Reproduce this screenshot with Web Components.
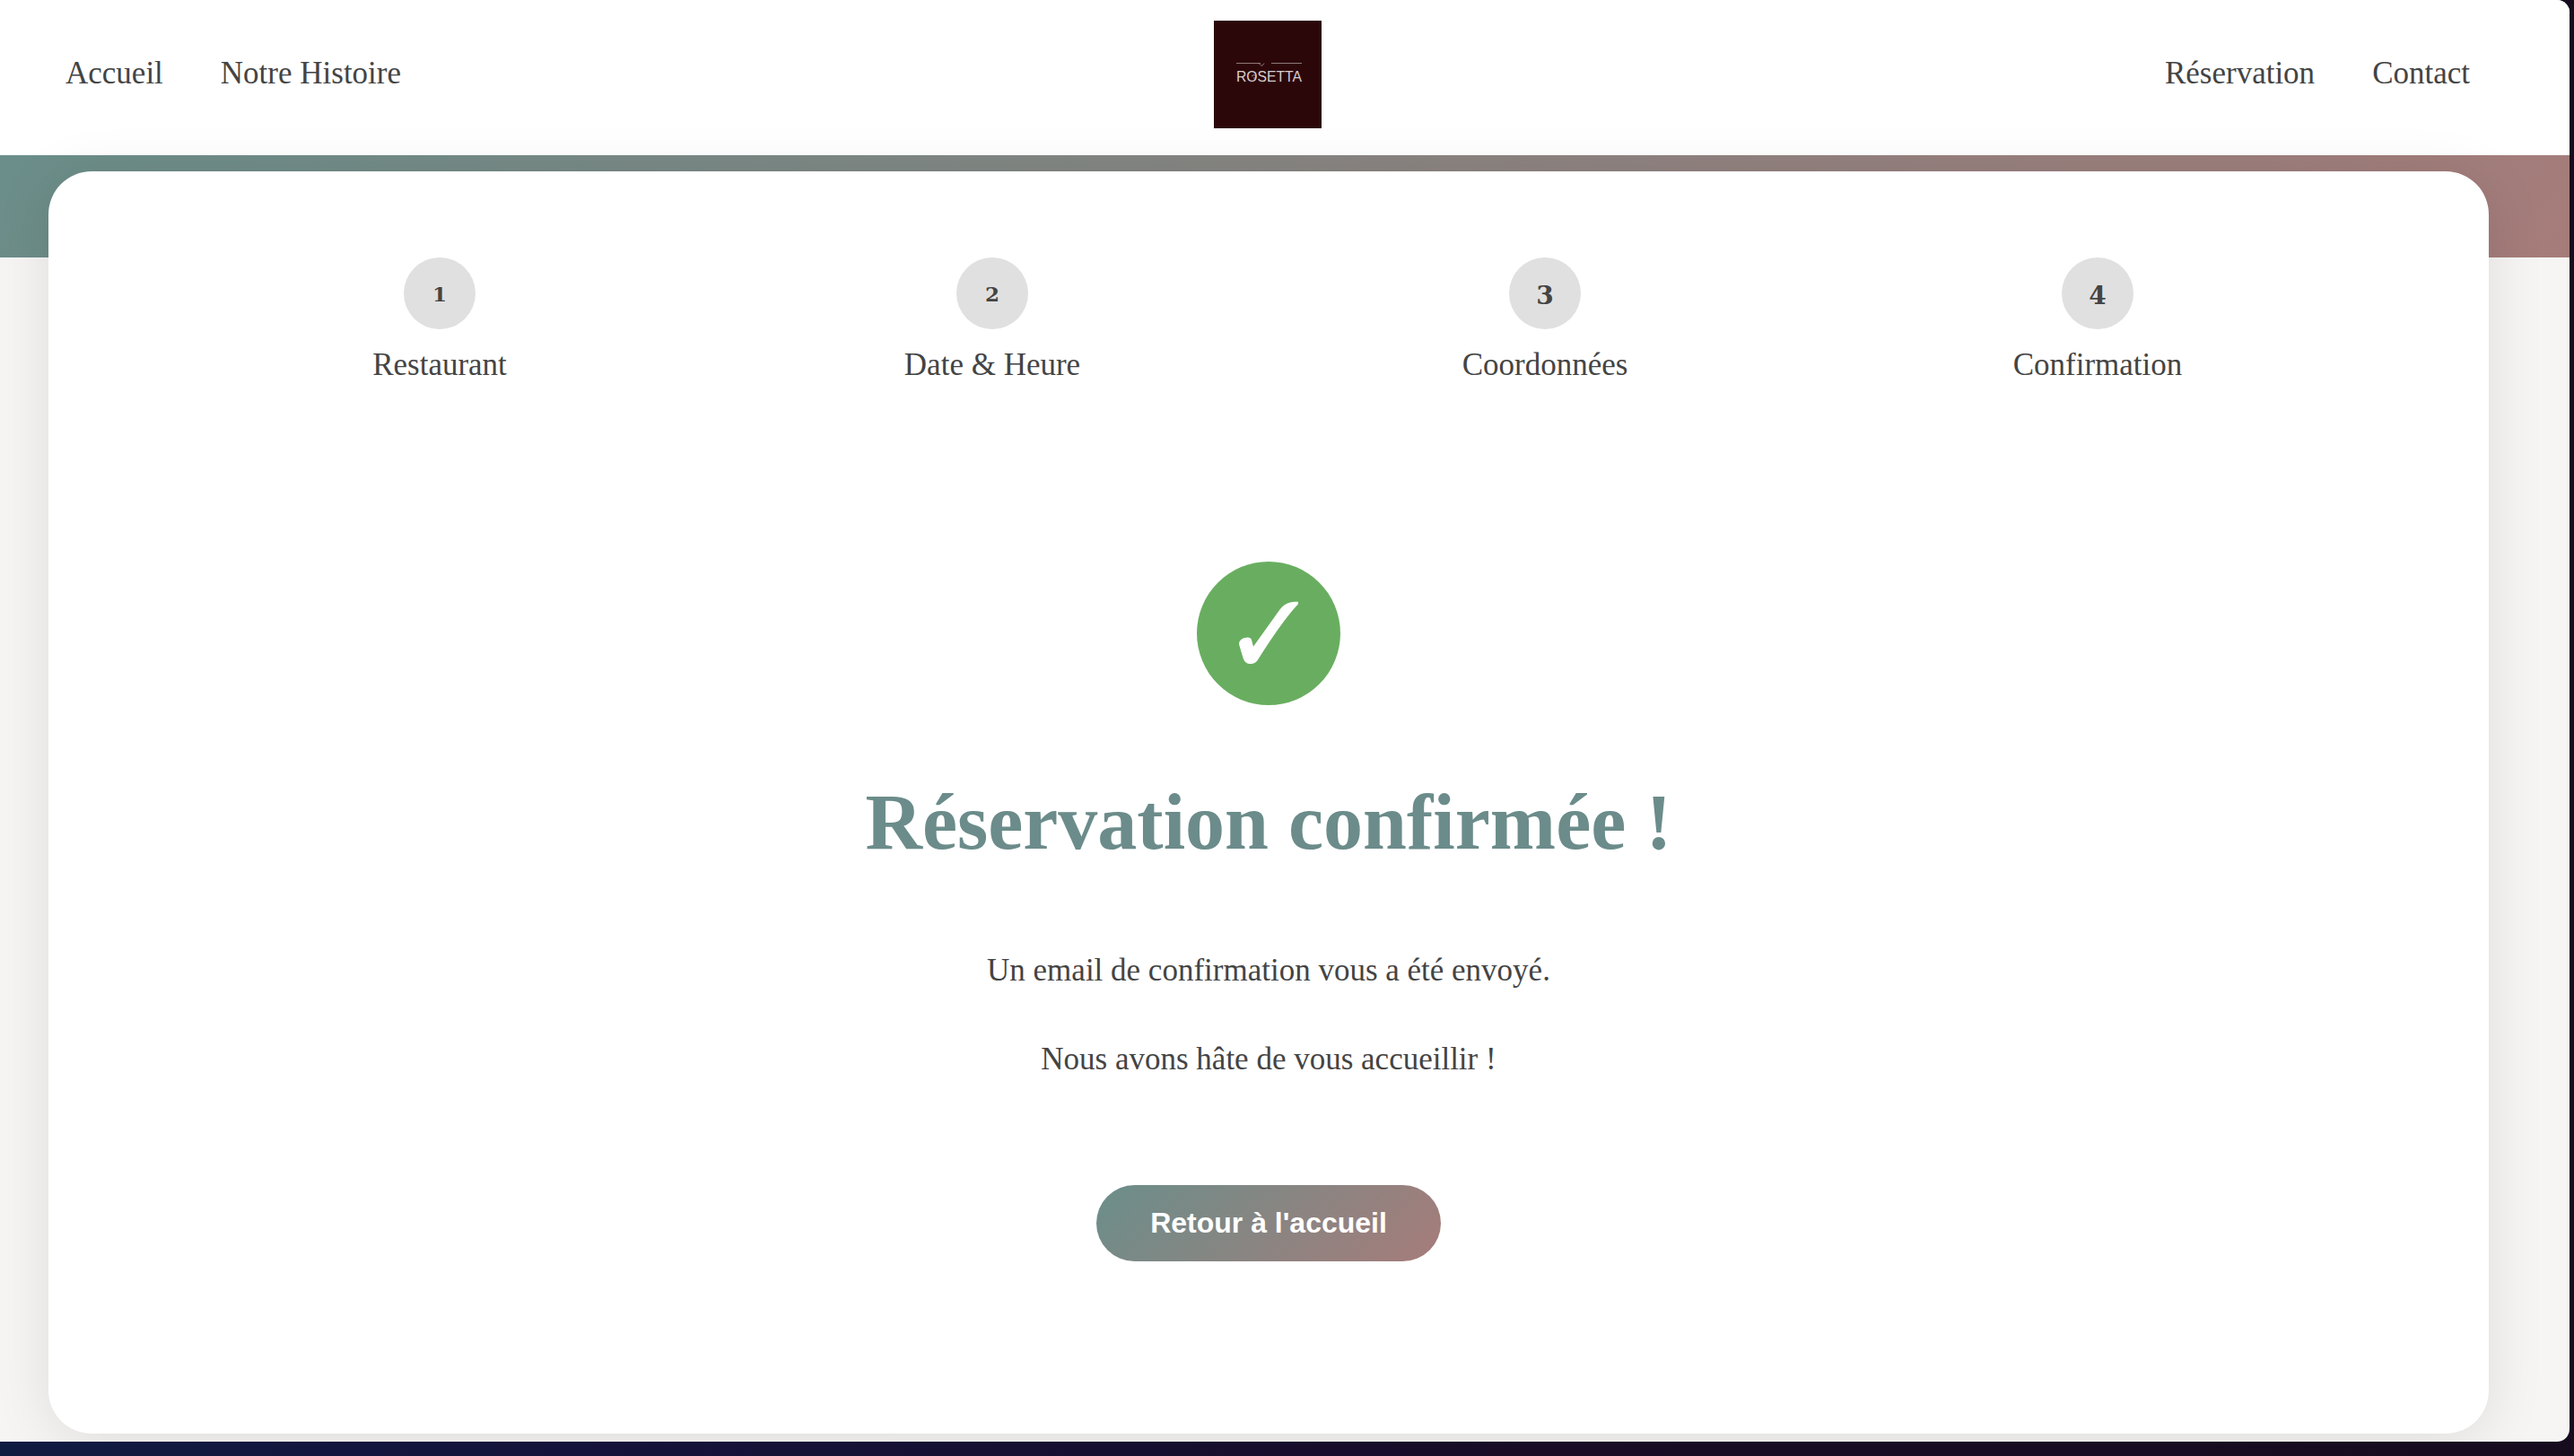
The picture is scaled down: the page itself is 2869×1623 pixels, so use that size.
<!DOCTYPE html>
<html lang="fr">
<head>
<meta charset="utf-8">
<title>Rosetta - Réservation confirmée</title>
<style>
  html, body { margin: 0; height: 1623px; overflow: hidden; }
  body {
    background: linear-gradient(90deg, #101b42 0%, #15123a 25%, #180c26 60%, #170b1e 100%);
    font-family: "Liberation Serif", serif;
    color: #444;
  }
</style>
</head>
<body>
<booking-page>
  <site-header slot="header">
    <nav-link slot="left">Accueil</nav-link>
    <nav-link slot="left">Notre Histoire</nav-link>
    <rosetta-logo slot="logo"></rosetta-logo>
    <nav-link slot="right">Réservation</nav-link>
    <nav-link slot="right">Contact</nav-link>
  </site-header>
  <booking-card>
    <booking-steps slot="steps">
      <step-item num="1">Restaurant</step-item>
      <step-item num="2">Date &amp; Heure</step-item>
      <step-item num="3" drop>Coordonnées</step-item>
      <step-item num="4" drop>Confirmation</step-item>
    </booking-steps>
    <success-panel slot="content">
      <span slot="title">Réservation confirmée !</span>
      <p>Un email de confirmation vous a été envoyé.</p>
      <p>Nous avons hâte de vous accueillir !</p>
      <pill-button slot="action">Retour à l'accueil</pill-button>
    </success-panel>
  </booking-card>
</booking-page>

<script>
class BookingPage extends HTMLElement {
  connectedCallback() {
    this.attachShadow({ mode: 'open' });
    this.shadowRoot.innerHTML = `
      <style>
        :host {
          display: block;
          width: 2864px;
          height: 1607px;
          background: #f6f5f3;
          border-radius: 0 14px 14px 0;
          overflow: hidden;
        }
        .hero {
          height: 114px;
          background: linear-gradient(135deg, #6b8e8a, #a67c7a);
        }
      </style>
      <slot name="header"></slot>
      <div class="hero"></div>
      <slot></slot>
    `;
  }
}

class SiteHeader extends HTMLElement {
  connectedCallback() {
    this.attachShadow({ mode: 'open' });
    this.shadowRoot.innerHTML = `
      <style>
        :host {
          display: grid;
          grid-template-columns: 1fr auto 1fr;
          align-items: center;
          box-sizing: border-box;
          height: 173px;
          padding: 23px 111px 30px 73px;
          background: #fff;
        }
        .links { display: flex; gap: 64px; margin-bottom: 3px; }
        .links.right { justify-content: flex-end; }
      </style>
      <div class="links"><slot name="left"></slot></div>
      <slot name="logo"></slot>
      <div class="links right"><slot name="right"></slot></div>
    `;
  }
}

class NavLink extends HTMLElement {
  connectedCallback() {
    this.attachShadow({ mode: 'open' });
    this.shadowRoot.innerHTML = `
      <style>
        :host {
          display: block;
          font: 35px/40px "Liberation Serif", serif;
          color: #444;
          white-space: nowrap;
        }
      </style>
      <slot></slot>
    `;
  }
}

class RosettaLogo extends HTMLElement {
  connectedCallback() {
    this.attachShadow({ mode: 'open' });
    this.shadowRoot.innerHTML = `
      <style>
        :host { display: block; width: 120px; height: 120px; background: #2c070a; }
        svg { display: block; }
        text { font-family: "Liberation Sans", sans-serif; font-size: 16px; fill: #d8cfcf; }
      </style>
      <svg width="120" height="120" viewBox="0 0 120 120">
        <path d="M25 47.5H52M64 47.5H98" stroke="#b9a9a9" stroke-width=".7" fill="none"/>
        <path d="M50 47.5l3 3M53 50.5q2-1 3-3" stroke="#b9a9a9" stroke-width=".7" fill="none"/>
        <text x="25" y="68" textLength="73" lengthAdjust="spacingAndGlyphs">ROSETTA</text>
        <path d="M42 62q3-3 5 0q0 3-3 2" stroke="#d8cfcf" stroke-width=".7" fill="none"/>
      </svg>
    `;
  }
}

class BookingCard extends HTMLElement {
  connectedCallback() {
    this.attachShadow({ mode: 'open' });
    this.shadowRoot.innerHTML = `
      <style>
        :host {
          display: block;
          position: relative;
          box-sizing: border-box;
          height: 1407px;
          margin: -96px 90px 0 54px;
          padding: 96px 128px 0;
          background: #fff;
          border-radius: 48px;
          box-shadow: 0 8px 64px rgba(0, 0, 0, .1);
        }
      </style>
      <slot name="steps"></slot>
      <slot name="content"></slot>
    `;
  }
}

class BookingSteps extends HTMLElement {
  connectedCallback() {
    this.attachShadow({ mode: 'open' });
    this.shadowRoot.innerHTML = `
      <style>
        :host { display: grid; grid-template-columns: repeat(4, 616px); }
      </style>
      <slot></slot>
    `;
  }
}

class StepItem extends HTMLElement {
  connectedCallback() {
    this.attachShadow({ mode: 'open' });
    // the reference font has old style figures: 3 and 4 hang below the baseline
    this.shadowRoot.innerHTML = `
      <style>
        :host {
          display: flex;
          flex-direction: column;
          align-items: center;
          gap: 20px;
          font: 35px/40px "Liberation Serif", serif;
          color: #444;
        }
        .num {
          display: flex;
          align-items: center;
          justify-content: center;
          width: 80px;
          height: 80px;
          border-radius: 50%;
          background: #e0e0e0;
          font: bold 23px/1 "DejaVu Serif", serif;
          color: #444;
        }
        :host([drop]) .num { font-size: 28px; padding-top: 6px; box-sizing: border-box; }
      </style>
      <div class="num">${this.getAttribute('num')}</div>
      <div><slot></slot></div>
    `;
  }
}

class SuccessPanel extends HTMLElement {
  connectedCallback() {
    this.attachShadow({ mode: 'open' });
    this.shadowRoot.innerHTML = `
      <style>
        :host {
          display: flex;
          flex-direction: column;
          align-items: center;
          margin-top: 199px;
        }
        svg { display: block; }
        h1 {
          margin: 81px 0 95px;
          font: bold 88px/100px "Liberation Serif", serif;
          color: #6b8c8a;
          white-space: nowrap;
        }
        .text {
          display: flex;
          flex-direction: column;
          gap: 59px;
          font: 35px/40px "Liberation Serif", serif;
          color: #444;
          text-align: center;
        }
        ::slotted(p) { margin: 0; }
        .action { margin-top: 120px; }
      </style>
      <svg width="160" height="160" viewBox="102 78 480 480">
        <circle cx="342" cy="318" r="240" fill="#69ae60"/>
        <path fill="#fff" d="M441 212C415 212 396 216 380 238L291 362L285 340C282 331 274 330 262 333C248 337 241 346 244 358L256 398C261 414 270 420 282 420C293 420 301 415 307 405C345 345 395 270 441 220Z"/>
      </svg>
      <h1><slot name="title"></slot></h1>
      <div class="text"><slot></slot></div>
      <div class="action"><slot name="action"></slot></div>
    `;
  }
}

class PillButton extends HTMLElement {
  connectedCallback() {
    this.attachShadow({ mode: 'open' });
    this.shadowRoot.innerHTML = `
      <style>
        :host {
          display: flex;
          align-items: center;
          justify-content: center;
          width: 384px;
          height: 85px;
          border-radius: 43px;
          background: linear-gradient(135deg, #6b8e8a, #a67c7a);
          font: bold 32px "Liberation Sans", Arial, sans-serif;
          color: #fff;
          cursor: pointer;
        }
      </style>
      <slot></slot>
    `;
  }
}

customElements.define('booking-page', BookingPage);
customElements.define('site-header', SiteHeader);
customElements.define('nav-link', NavLink);
customElements.define('rosetta-logo', RosettaLogo);
customElements.define('booking-card', BookingCard);
customElements.define('booking-steps', BookingSteps);
customElements.define('step-item', StepItem);
customElements.define('success-panel', SuccessPanel);
customElements.define('pill-button', PillButton);
</script>
</body>
</html>
